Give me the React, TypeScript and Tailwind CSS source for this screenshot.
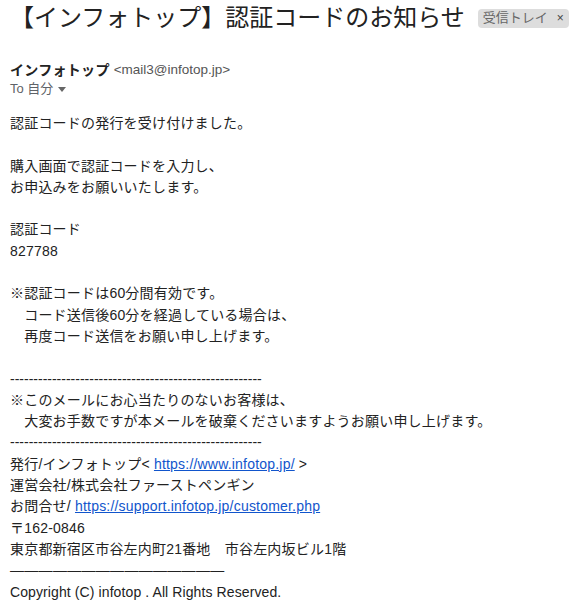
import type { ReactNode } from "react";

const FONT = { fontFamily: '"Liberation Sans", Arial, "Noto Sans CJK JP", sans-serif' };

const DASHES = "-".repeat(54);
const RULE = "—".repeat(15);

function Line({ children, track = "tracking-[0.2px]" }: { children?: ReactNode; track?: string }) {
  return <div className={`h-[21.3px] leading-[21.3px] whitespace-pre ${track}`}>{children}</div>;
}

function Link({ href }: { href: string }) {
  return (
    <a href={href} className="text-[#1155cc] underline">
      {href}
    </a>
  );
}

export default function App() {
  return (
    <div style={FONT} className="h-[614px] w-[576px] overflow-hidden bg-white text-[#222]">
      {/* subject + label */}
      <div className="flex h-[36px] items-center pl-[10px]">
        <h1 className="text-[24px] leading-[36px] font-normal text-[#222]">【インフォトップ】認証コードのお知らせ</h1>
        <span className="ml-[13px] flex h-[19px] items-center gap-[9px] rounded-[4px] bg-[#dddddd] px-[5px] text-[13px] text-[#666]">
          受信トレイ
          <span className="text-[12px] text-[#444]">×</span>
        </span>
      </div>

      {/* sender */}
      <div className="mt-[24px] flex h-[20px] items-center gap-[4px] pl-[10px]">
        <span className="text-[14px] font-bold tracking-[0.3px] text-[#222]">インフォトップ</span>
        <span className="text-[13.5px] text-[#555]">&lt;mail3@infotop.jp&gt;</span>
      </div>
      <div className="flex h-[18px] items-center gap-[5px] pl-[10px] text-[13px] text-[#5f6368]">
        <span>To 自分</span>
        <svg width="8" height="5" viewBox="0 0 8 5" className="mt-[1px]">
          <polygon points="0,0 8,0 4,5" fill="#666" />
        </svg>
      </div>

      {/* body */}
      <div className="mt-[15px] pl-[10px] text-[14px]">
        <Line>認証コードの発行を受け付けました。</Line>
        <Line />
        <Line>購入画面で認証コードを入力し、</Line>
        <Line>お申込みをお願いいたします。</Line>
        <Line />
        <Line>認証コード</Line>
        <Line>827788</Line>
        <Line />
        <Line>※認証コードは60分間有効です。</Line>
        <Line>{"　コード送信後60分を経過している場合は、"}</Line>
        <Line>{"　再度コード送信をお願い申し上げます。"}</Line>
        <Line />
        <Line track="">{DASHES}</Line>
        <Line>※このメールにお心当たりのないお客様は、</Line>
        <Line>{"　大変お手数ですが本メールを破棄くださいますようお願い申し上げます。"}</Line>
        <Line track="">{DASHES}</Line>
        <Line>
          発行/インフォトップ&lt; <Link href="https://www.infotop.jp/" /> &gt;
        </Line>
        <Line>運営会社/株式会社ファーストペンギン</Line>
        <Line>
          お問合せ/ <Link href="https://support.infotop.jp/customer.php" />
        </Line>
        <Line>〒162-0846</Line>
        <Line>{"東京都新宿区市谷左内町21番地　市谷左内坂ビル1階"}</Line>
        <Line track="tracking-[0.3px]">{RULE}</Line>
        <Line track="tracking-[0.1px]">Copyright (C) infotop . All Rights Reserved.</Line>
      </div>
    </div>
  );
}
